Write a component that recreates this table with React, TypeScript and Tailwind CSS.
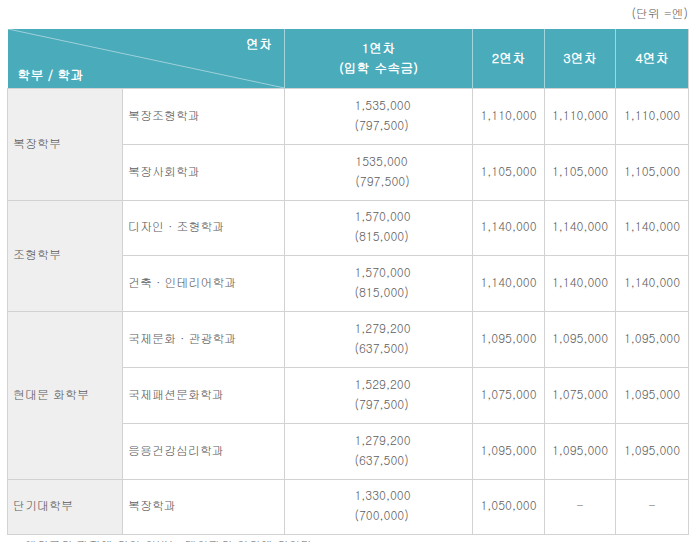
import React from 'react';

type Dept = { name: string; first: string; firstSub: string; y2: string; y3: string; y4: string; h: string };
type Faculty = { name: string; depts: Dept[] };

const FACULTIES: Faculty[] = [
  {
    name: '복장학부',
    depts: [
      { name: '복장조형학과', first: '1,535,000', firstSub: '(797,500)', y2: '1,110,000', y3: '1,110,000', y4: '1,110,000', h: 'h-[56px]' },
      { name: '복장사회학과', first: '1535,000', firstSub: '(797,500)', y2: '1,105,000', y3: '1,105,000', y4: '1,105,000', h: 'h-[56px]' },
    ],
  },
  {
    name: '조형학부',
    depts: [
      { name: '디자인 · 조형학과', first: '1,570,000', firstSub: '(815,000)', y2: '1,140,000', y3: '1,140,000', y4: '1,140,000', h: 'h-[55px]' },
      { name: '건축 · 인테리어학과', first: '1,570,000', firstSub: '(815,000)', y2: '1,140,000', y3: '1,140,000', y4: '1,140,000', h: 'h-[56px]' },
    ],
  },
  {
    name: '현대문 화학부',
    depts: [
      { name: '국제문화 · 관광학과', first: '1,279,200', firstSub: '(637,500)', y2: '1,095,000', y3: '1,095,000', y4: '1,095,000', h: 'h-[56px]' },
      { name: '국제패션문화학과', first: '1,529,200', firstSub: '(797,500)', y2: '1,075,000', y3: '1,075,000', y4: '1,095,000', h: 'h-[56px]' },
      { name: '응용건강심리학과', first: '1,279,200', firstSub: '(637,500)', y2: '1,095,000', y3: '1,095,000', y4: '1,095,000', h: 'h-[56px]' },
    ],
  },
  {
    name: '단기대학부',
    depts: [
      { name: '복장학과', first: '1,330,000', firstSub: '(700,000)', y2: '1,050,000', y3: '-', y4: '-', h: 'h-[55px]' },
    ],
  },
];

const font = "font-['Gulim','Noto_Sans_CJK_KR',sans-serif]";
const cell = 'border border-[#d2d2d2] align-middle pt-0 pb-[4px]';

const App = () => {
  return (
    <div className={`w-[696px] h-[542px] overflow-hidden bg-white ${font} text-[12px] text-[#5e5e5e]`}>
      {/* unit */}
      <div className="h-[29px] pt-[5px] pr-[8px] text-right leading-[16px] text-[#666]">(단위 =엔)</div>

      <table className="ml-[7px] w-[681px] table-fixed border-collapse">
        <colgroup>
          <col className="w-[115px]" />
          <col className="w-[162px]" />
          <col className="w-[188px]" />
          <col className="w-[72px]" />
          <col className="w-[71px]" />
          <col className="w-[73px]" />
        </colgroup>
        <thead>
          <tr className="h-[59px] bg-[#4aabbb] text-white font-bold text-[13px]">
            <th colSpan={2} className="relative p-0 border-r border-[#a3d5dd]">
              {/* diagonal */}
              <svg className="absolute inset-0 w-full h-full" viewBox="0 0 277 59" preserveAspectRatio="none">
                <line x1="0" y1="0" x2="277" y2="59" stroke="#9fd1da" strokeWidth="1" />
              </svg>
              <div className="relative flex flex-col h-[59px] pl-[10px] pr-[12px]">
                <div className="text-right pt-[7px] leading-[16px]">연차</div>
                <div className="text-left mt-auto pb-[5px] leading-[16px]">학부 / 학과</div>
              </div>
            </th>
            <th className="p-0 pb-[2px] border-r border-[#a3d5dd] leading-[20px]">
              1연차<br />(입학 수속금)
            </th>
            <th className="p-0 pb-[2px] border-r border-[#a3d5dd]">2연차</th>
            <th className="p-0 pb-[2px] border-r border-[#a3d5dd]">3연차</th>
            <th className="p-0 pb-[2px] border-r border-[#d2d2d2]">4연차</th>
          </tr>
        </thead>
        <tbody>
          {FACULTIES.map((fac) =>
            fac.depts.map((d, i) => (
              <tr key={d.name} className={d.h}>
                {i === 0 && (
                  <td rowSpan={fac.depts.length} className={`${cell} bg-[#efefef] pl-[5px]`}>
                    {fac.name}
                  </td>
                )}
                <td className={`${cell} pl-[5px]`}>{d.name}</td>
                <td className={`${cell} text-center`}>
                  <div className="inline-block text-left leading-[20px] pl-[8px]">
                    {d.first}
                    <br />
                    {d.firstSub}
                  </div>
                </td>
                <td className={`${cell} text-center`}>{d.y2}</td>
                <td className={`${cell} text-center`}>{d.y3}</td>
                <td className={`${cell} text-center`}>{d.y4}</td>
              </tr>
            ))
          )}
        </tbody>
      </table>

      <div className="pl-[16px] pt-[2px] leading-[16px] text-[#666]">· 해외국외 과정에 의한 학비는 대학과의 협의에 의한다.</div>
    </div>
  );
};

export default App;
